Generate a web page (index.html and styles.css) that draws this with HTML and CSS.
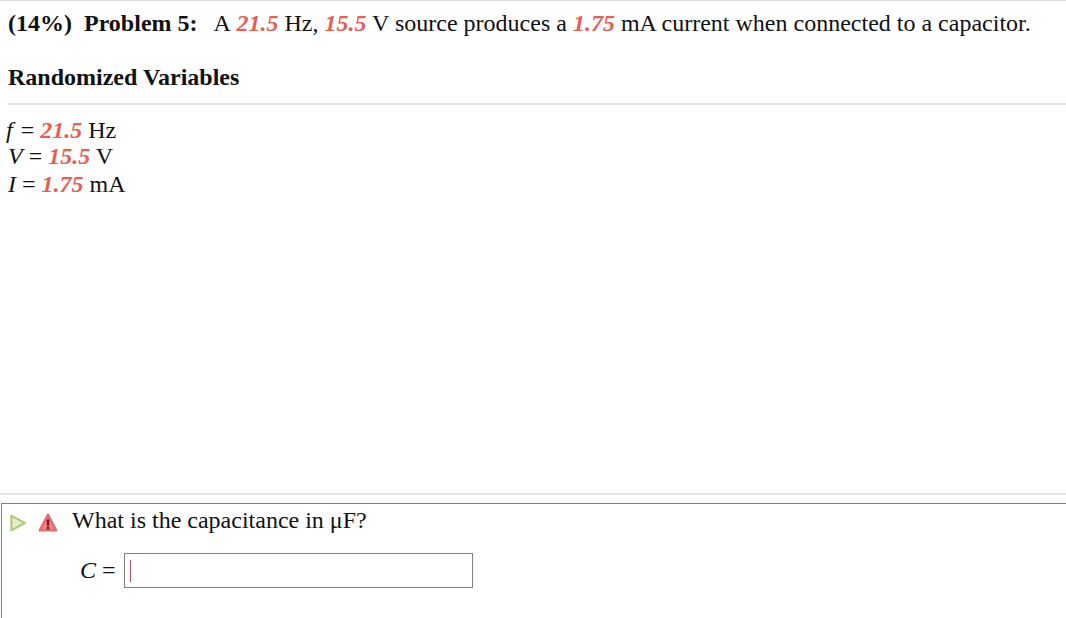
FILE: index.html
```html
<!DOCTYPE html>
<html lang="en">
<head>
<meta charset="utf-8">
<title>Problem 5</title>
<link rel="stylesheet" href="styles.css">
</head>
<body>
<main class="page">
  <section class="problem">
    <p class="statement"><b class="label">(14%)</b><b class="label">Problem 5:</b><span>A <i class="val val-first">21.5</i> Hz, <i class="val">15.5</i> V source produces a <i class="val">1.75</i> mA current when connected to a capacitor.</span></p>
    <h2 class="heading">Randomized Variables</h2>
    <div class="vars">
      <div><i class="sym sym-f">f</i> = <i class="val">21.5</i> Hz</div>
      <div class="var-mid"><i class="sym">V</i> = <i class="val">15.5</i> V</div>
      <div><i class="sym">I</i> = <i class="val">1.75</i> mA</div>
    </div>
  </section>
  <section class="answer-wrap">
    <div class="answer">
      <div class="question">
        <svg class="icon-play" width="16" height="18" viewBox="0 0 16 18" aria-hidden="true"><path d="M1.4 1.6 L14.8 9 L1.4 16.4 Z" fill="#e4f0c4" stroke="#b0c980" stroke-width="2.2" stroke-linejoin="round"/></svg>
        <svg class="icon-warn" width="20" height="20" viewBox="0 0 20 20" aria-hidden="true"><path d="M10 1.8 L18.2 17.2 H1.8 Z" fill="#f67f84" stroke="#dd6d73" stroke-width="2.4" stroke-linejoin="round"/><path d="M8.5 6.5 H11.5 L10.9 13 H9.1 Z" fill="#7e1a20"/><circle cx="10" cy="15" r="1.5" fill="#7e1a20"/></svg>
        <span class="qtext">What is the capacitance in μF?</span>
      </div>
      <div class="entry">
        <span class="entry-label"><i>C</i> =</span>
        <div class="input"><span class="caret"></span></div>
      </div>
    </div>
  </section>
</main>
</body>
</html>
```
FILE: styles.css
```css
html, body {
  margin: 0;
  padding: 0;
  background: #fff;
}
body {
  font-family: "Liberation Serif", "Times New Roman", serif;
  color: #111;
  overflow: hidden;
}
.page {
  width: 1066px;
  height: 618px;
  display: flex;
  flex-direction: column;
  border-top: 1px solid #dedede;
  box-sizing: border-box;
}
.problem {
  height: 492px;
  box-sizing: border-box;
  padding-left: 8px;
  flex: none;
}
.statement {
  margin: 0;
  padding-top: 9px;
  font-size: 24px;
  line-height: 27px;
  white-space: nowrap;
  display: flex;
}
.label {
  margin-right: 12px;
}
.label + .label {
  margin-right: 16px;
}
.val {
  color: #e5604f;
  font-weight: bold;
  font-style: italic;
}
.val-first {
  margin-left: 1px;
}
.heading {
  margin: 27px 0 0;
  padding-bottom: 13px;
  font-size: 24px;
  line-height: 26px;
  font-weight: bold;
  border-bottom: 2px solid #e3e3e3;
}
.vars {
  margin-top: 12px;
  font-size: 24px;
  line-height: 27px;
}
.var-mid {
  margin: -1px 0 1px;
}
.sym-f {
  margin: 0 2px 0 -2px;
}
.answer-wrap {
  flex: 1;
  border-top: 2px solid #e3e3e3;
  padding: 8px 0 0 1px;
}
.answer {
  height: 120px;
  border: 1px solid #808080;
  border-width: 1px 0 0 1px;
}
.question {
  display: flex;
  align-items: center;
  height: 34px;
  padding-left: 8px;
}
.icon-play {
  margin-top: 3px;
}
.icon-warn {
  margin: 3px 0 0 12px;
}
.qtext {
  margin-left: 14px;
  margin-top: -2px;
  font-size: 24px;
  line-height: 27px;
}
.entry {
  display: flex;
  align-items: center;
  margin-top: 15px;
  padding-left: 78px;
}
.entry-label {
  font-size: 24px;
  line-height: 27px;
  margin-right: 8px;
}
.input {
  width: 349px;
  height: 35px;
  border: 1px solid #808080;
  display: flex;
  align-items: center;
  padding-left: 5px;
  box-sizing: border-box;
}
.caret {
  width: 1px;
  height: 22px;
  background: #c2505a;
}
```
